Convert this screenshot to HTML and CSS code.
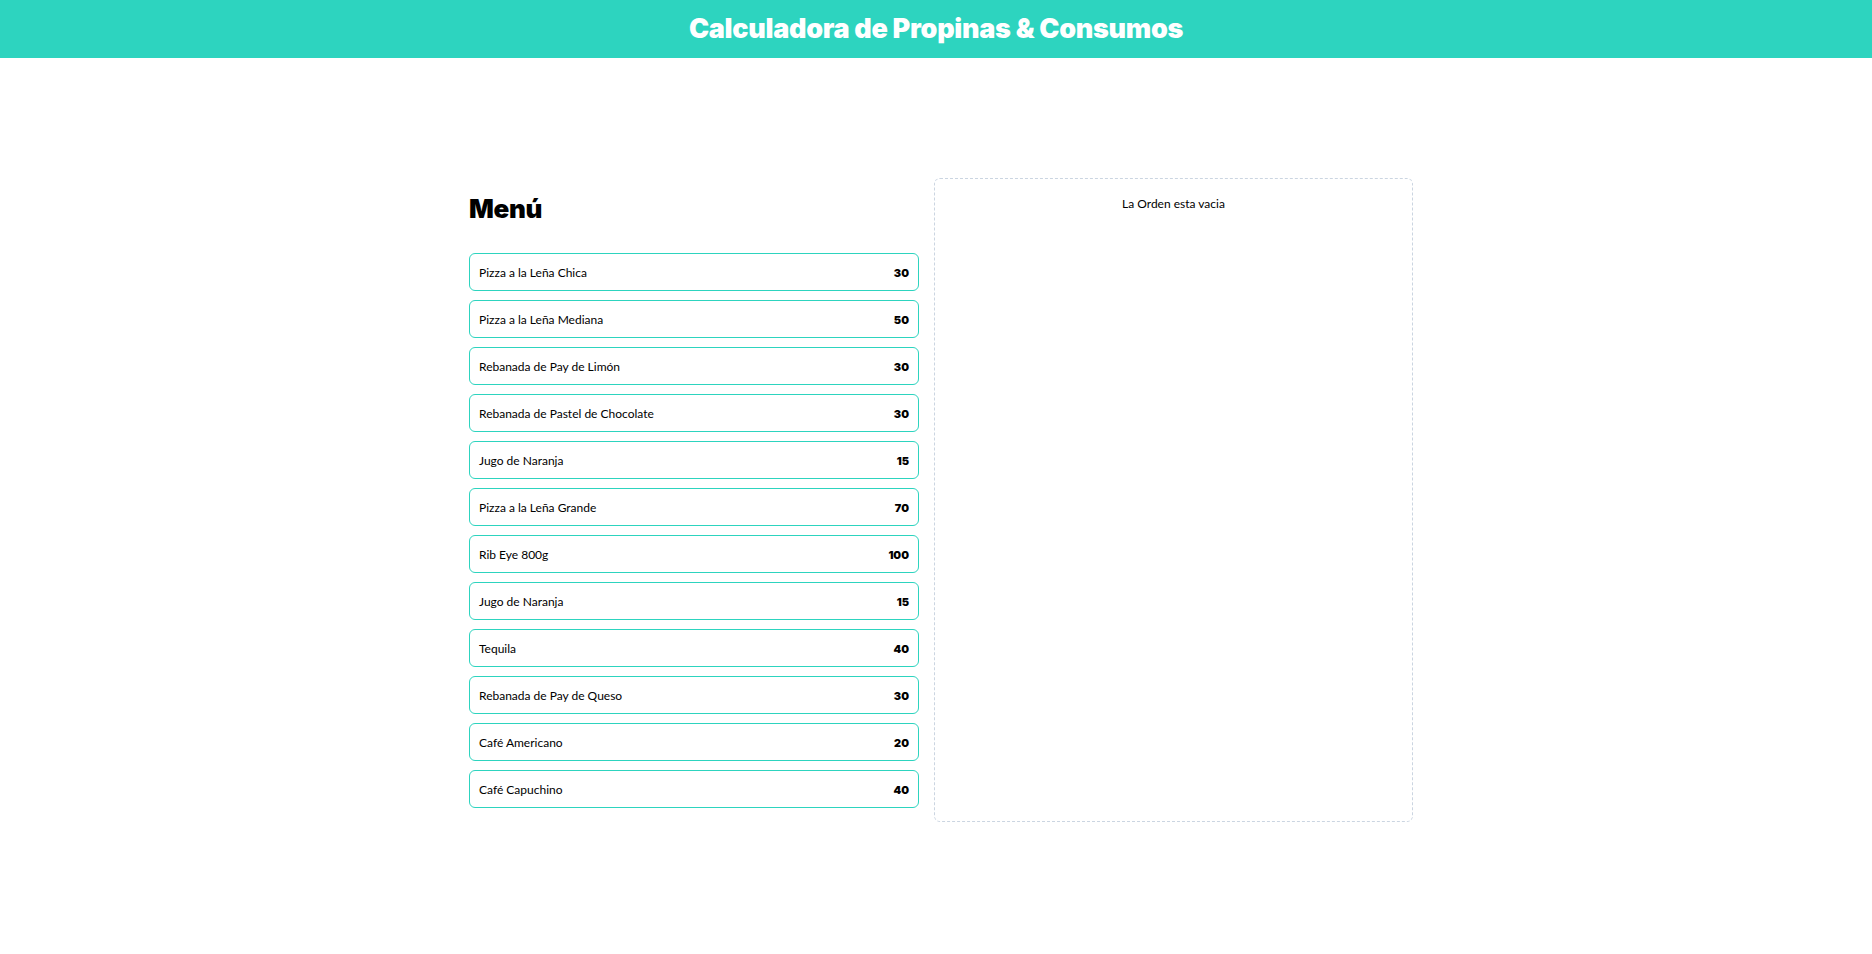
FILE: index.html
```html
<!DOCTYPE html>
<html lang="es">
<head>
<meta charset="utf-8">
<title>Calculadora de Propinas &amp; Consumos</title>
<link rel="stylesheet" href="styles.css">
</head>
<body>
<header class="topbar">
  <h1 class="title">Calculadora de Propinas &amp; Consumos</h1>
</header>
<main class="layout">
  <section class="menu">
    <h2 class="menu-title">Menú</h2>
    <div class="items">
      <button class="item"><span class="name">Pizza a la Leña Chica</span><span class="price">30</span></button>
      <button class="item"><span class="name">Pizza a la Leña Mediana</span><span class="price">50</span></button>
      <button class="item"><span class="name">Rebanada de Pay de Limón</span><span class="price">30</span></button>
      <button class="item"><span class="name">Rebanada de Pastel de Chocolate</span><span class="price">30</span></button>
      <button class="item"><span class="name">Jugo de Naranja</span><span class="price">15</span></button>
      <button class="item"><span class="name">Pizza a la Leña Grande</span><span class="price">70</span></button>
      <button class="item"><span class="name">Rib Eye 800g</span><span class="price">100</span></button>
      <button class="item"><span class="name">Jugo de Naranja</span><span class="price">15</span></button>
      <button class="item"><span class="name">Tequila</span><span class="price">40</span></button>
      <button class="item"><span class="name">Rebanada de Pay de Queso</span><span class="price">30</span></button>
      <button class="item"><span class="name">Café Americano</span><span class="price">20</span></button>
      <button class="item"><span class="name">Café Capuchino</span><span class="price">40</span></button>
    </div>
  </section>
  <section class="order">
    <p class="empty">La Orden esta vacia</p>
  </section>
</main>
</body>
</html>
```
FILE: styles.css
```css
* { box-sizing: border-box; }
html, body { margin: 0; padding: 0; }
body {
  font-family: Lato, "Liberation Sans", sans-serif;
  color: #000;
  background: #fff;
  font-size: 12px;
  line-height: 16px;
}
.topbar {
  background: #2dd4bf;
  height: 58px;
  display: flex;
  align-items: center;
  justify-content: center;
}
.title {
  margin: 0;
  color: #fff;
  font-family: Inter, Roboto, sans-serif;
  font-size: 27px;
  line-height: 36px;
  font-weight: 900;
  letter-spacing: -0.3px;
}
.layout {
  width: 954px;
  margin: 120px auto 0;
  padding-left: 10px;
  display: grid;
  grid-template-columns: 450px 479px;
  column-gap: 15px;
}
.menu {
  padding: 15px 0 14px;
}
.menu-title {
  margin: 0 0 28px;
  font-family: Inter, Roboto, sans-serif;
  font-size: 26px;
  line-height: 32px;
  font-weight: 900;
  letter-spacing: -0.3px;
}
.items {
  display: flex;
  flex-direction: column;
  gap: 9px;
}
.item {
  display: flex;
  justify-content: space-between;
  align-items: center;
  height: 38px;
  padding: 2px 9px 0;
  border: 1px solid #2dd4bf;
  border-radius: 6px;
  background: #fff;
  font: inherit;
  color: inherit;
  text-align: left;
  cursor: pointer;
}
.price {
  font-family: Inter, Roboto, sans-serif;
  font-size: 11px;
  font-weight: 900;
}
.order {
  border: 1px dashed #cbd5e1;
  border-radius: 6px;
  padding: 17px 16px 16px;
}
.empty {
  margin: 0;
  text-align: center;
}
```
